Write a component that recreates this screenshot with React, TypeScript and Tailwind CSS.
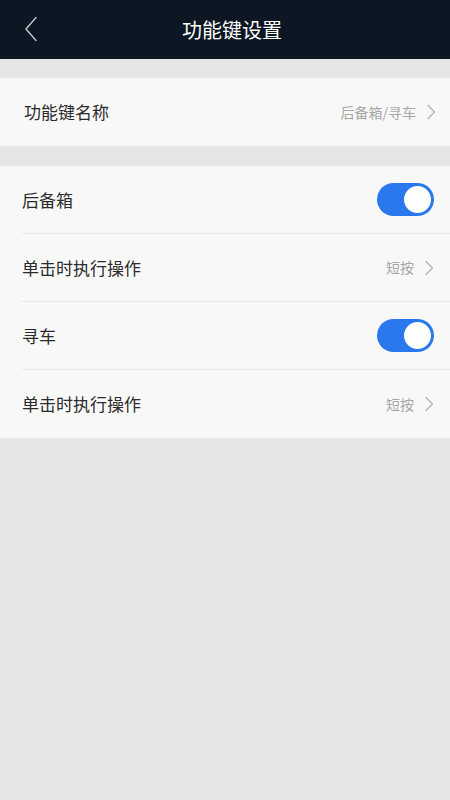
import React, { useState } from 'react';

const font = { fontFamily: '"Noto Sans CJK SC", "Noto Sans", sans-serif' };

const Chevron = ({ className = '' }: { className?: string }) => (
  <svg width="10" height="16" viewBox="0 0 10 16" className={className} fill="none">
    <path d="M2 1.5 L8.5 8 L2 14.5" stroke="currentColor" strokeWidth="1.3" strokeLinecap="round" strokeLinejoin="round" />
  </svg>
);

const Toggle = ({ on, onChange }: { on: boolean; onChange: () => void }) => (
  <button
    onClick={onChange}
    className={`w-[57px] h-[33px] rounded-full p-[3px] flex items-center ${on ? 'bg-[#2a78ee] justify-end' : 'bg-[#d9d9d9] justify-start'}`}
  >
    <span className="w-[27px] h-[27px] rounded-full bg-white block" />
  </button>
);

const Row = ({ label, children, divider }: { label: string; children: React.ReactNode; divider?: boolean }) => (
  <div className="pl-[22px]">
    <div className={`h-[68px] flex items-center justify-between pr-[16px] ${divider ? 'border-b border-[#e6e6e6]' : ''}`}>
      <span className="text-[17px] text-[#2b2b2b]">{label}</span>
      {children}
    </div>
  </div>
);

const Value = ({ text }: { text: string }) => (
  <div className="flex items-center gap-[10px] text-[#a6a6a6]">
    <span className="text-[14px]">{text}</span>
    <Chevron className="text-[#b3b3b3]" />
  </div>
);

const App = () => {
  const [trunk, setTrunk] = useState(true);
  const [findCar, setFindCar] = useState(true);

  return (
    <div className="w-[450px] h-[800px] bg-[#e6e6e6] flex flex-col" style={font}>
      {/* Header */}
      <div className="h-[59px] bg-[#0d1623] flex items-center relative">
        <button className="absolute left-[24px] top-[16px] text-[#c9ccd1]">
          <svg width="14" height="26" viewBox="0 0 14 26" fill="none">
            <path d="M12 1.5 L2 13 L12 24.5" stroke="currentColor" strokeWidth="1.3" strokeLinecap="round" strokeLinejoin="round" />
          </svg>
        </button>
        <h1 className="flex-1 text-center text-white text-[20px] pl-[14px]">功能键设置</h1>
      </div>

      {/* Key name */}
      <div className="mt-[19px] bg-[#f8f8f8]">
        <div className="h-[68px] flex items-center justify-between pl-[24px] pr-[14px]">
          <span className="text-[17px] text-[#2b2b2b]">功能键名称</span>
          <Value text="后备箱/寻车" />
        </div>
      </div>

      {/* Functions */}
      <div className="mt-[20px] bg-[#f8f8f8]">
        <Row label="后备箱" divider>
          <Toggle on={trunk} onChange={() => setTrunk(!trunk)} />
        </Row>
        <Row label="单击时执行操作" divider>
          <Value text="短按" />
        </Row>
        <Row label="寻车" divider>
          <Toggle on={findCar} onChange={() => setFindCar(!findCar)} />
        </Row>
        <Row label="单击时执行操作">
          <Value text="短按" />
        </Row>
      </div>
    </div>
  );
};

export default App;
